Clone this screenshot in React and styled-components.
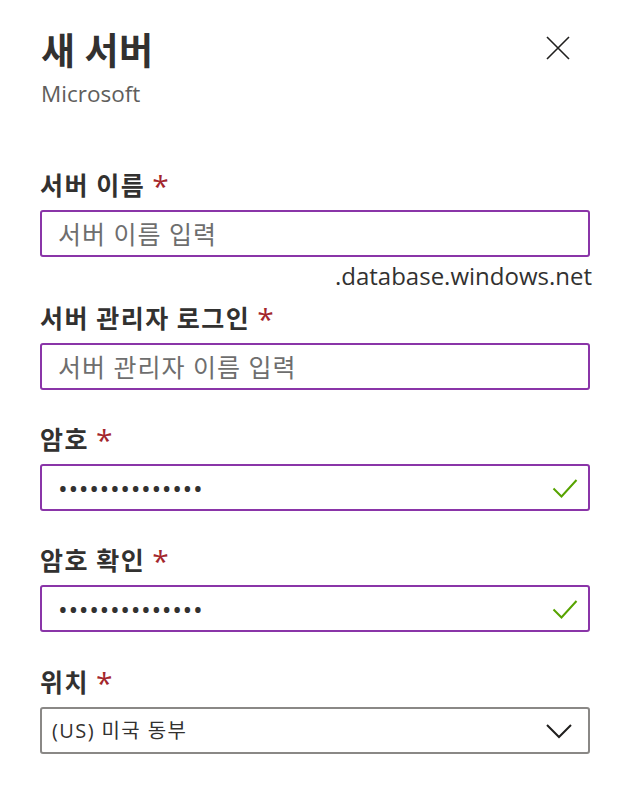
import React from "react";
import styled, { createGlobalStyle } from "styled-components";

const Global = createGlobalStyle`
  html, body { margin: 0; padding: 0; background: #ffffff; }
  body { font-family: "Open Sans", "Noto Sans CJK KR", sans-serif; color: #323130; }
  * { box-sizing: border-box; }
`;

const Panel = styled.div`
  width: 625px;
  padding: 25px 35px 0 40px;
  display: flex;
  flex-direction: column;
`;

const Header = styled.header`
  display: flex;
  justify-content: space-between;
  align-items: flex-start;
`;

const TitleBlock = styled.div`
  display: flex;
  flex-direction: column;
`;

const Title = styled.h1`
  margin: 0 0 0 1px;
  font-family: "Noto Sans CJK KR", sans-serif;
  font-size: 37px;
  font-weight: 700;
  letter-spacing: 0.5px;
  line-height: 48px;
  color: #323130;
`;

const Subtitle = styled.div`
  margin-top: 6px;
  margin-left: 1px;
  font-family: "Open Sans", sans-serif;
  font-size: 22.5px;
  line-height: 30px;
  color: #605e5c;
`;

const CloseButton = styled.button`
  width: 44px;
  height: 44px;
  margin-top: 1px;
  margin-right: 10px;
  padding: 0;
  border: none;
  background: transparent;
  display: flex;
  align-items: center;
  justify-content: center;
  cursor: pointer;
`;

const Form = styled.form`
  display: flex;
  flex-direction: column;
  margin-top: 59px;
`;

const Field = styled.div`
  display: flex;
  flex-direction: column;
  margin-top: ${(p) => p.$gap || 0}px;
`;

const Label = styled.label`
  font-family: "Noto Sans CJK KR", sans-serif;
  font-size: 25px;
  font-weight: 700;
  letter-spacing: 1.5px;
  line-height: 32px;
  color: #323130;
  margin-bottom: 10px;
  display: flex;
  align-items: baseline;
`;

const Required = styled.span`
  font-family: "Open Sans", sans-serif;
  color: #a4262c;
  margin-left: 7px;
  font-size: 30px;
  line-height: 20px;
  font-weight: 400;
  position: relative;
  top: 2px;
`;

const Box = styled.div`
  height: 47px;
  border: 2px solid ${(p) => (p.$variant === "select" ? "#8a8886" : "#8a35a8")};
  border-radius: 3px;
  display: flex;
  align-items: center;
  padding: 0 ${(p) => (p.$variant === "select" ? "16px" : "10px")} 0
    ${(p) => (p.$variant === "select" ? "10px" : "16px")};
  background: #fff;
`;

const TextInput = styled.input`
  flex: 1;
  min-width: 0;
  border: none;
  outline: none;
  background: transparent;
  padding: 0;
  font-family: "Open Sans", "Noto Sans CJK KR", sans-serif;
  font-size: 25px;
  letter-spacing: 1px;
  color: #323130;
  &::placeholder {
    color: #6e6e6e;
  }
`;

const PasswordInput = styled.input`
  flex: 1;
  min-width: 0;
  border: none;
  outline: none;
  background: transparent;
  padding: 0;
  font-family: "Open Sans", sans-serif;
  font-size: 26px;
  letter-spacing: 0.6px;
  color: #323130;
`;

const SelectValue = styled.div`
  flex: 1;
  font-family: "Open Sans", "Noto Sans CJK KR", sans-serif;
  font-size: 20px;
  letter-spacing: 1.4px;
  line-height: 28px;
  color: #323130;
`;

const Hint = styled.div`
  align-self: flex-end;
  margin-right: -2px;
  font-family: "Open Sans", sans-serif;
  font-size: 24px;
  line-height: 30px;
  color: #323130;
  margin-top: 4px;
`;

const CloseIcon = () => (
  <svg width="24" height="24" viewBox="0 0 24 24">
    <path d="M1 1 L23 23 M23 1 L1 23" stroke="#201f1e" strokeWidth="1.6" fill="none" />
  </svg>
);

const Check = () => (
  <svg width="26" height="20" viewBox="0 0 26 20">
    <polyline points="1.5,10.5 9.5,18.5 24.5,2" stroke="#57a300" strokeWidth="2" fill="none" />
  </svg>
);

const Chevron = () => (
  <svg width="26" height="16" viewBox="0 0 26 16">
    <polyline points="1,2 13,14 25,2" stroke="#201f1e" strokeWidth="2" fill="none" />
  </svg>
);

export default function App() {
  return (
    <>
      <Global />
      <Panel>
        <Header>
          <TitleBlock>
            <Title>새 서버</Title>
            <Subtitle>Microsoft</Subtitle>
          </TitleBlock>
          <CloseButton type="button" aria-label="닫기">
            <CloseIcon />
          </CloseButton>
        </Header>
        <Form onSubmit={(e) => e.preventDefault()}>
          <Field>
            <Label>
              서버 이름<Required>*</Required>
            </Label>
            <Box>
              <TextInput placeholder="서버 이름 입력" />
            </Box>
            <Hint>.database.windows.net</Hint>
          </Field>
          <Field $gap={10}>
            <Label>
              서버 관리자 로그인<Required>*</Required>
            </Label>
            <Box>
              <TextInput placeholder="서버 관리자 이름 입력" />
            </Box>
          </Field>
          <Field $gap={32}>
            <Label>
              암호<Required>*</Required>
            </Label>
            <Box>
              <PasswordInput type="password" defaultValue="abcdefghijklmn" readOnly />
              <Check />
            </Box>
          </Field>
          <Field $gap={32}>
            <Label>
              암호 확인<Required>*</Required>
            </Label>
            <Box>
              <PasswordInput type="password" defaultValue="abcdefghijklmn" readOnly />
              <Check />
            </Box>
          </Field>
          <Field $gap={33}>
            <Label>
              위치<Required>*</Required>
            </Label>
            <Box $variant="select">
              <SelectValue>(US) 미국 동부</SelectValue>
              <Chevron />
            </Box>
          </Field>
        </Form>
      </Panel>
    </>
  );
}
